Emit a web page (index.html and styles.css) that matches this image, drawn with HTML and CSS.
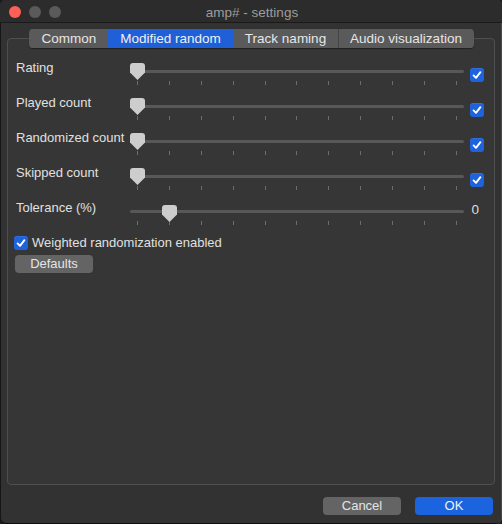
FILE: index.html
```html
<!DOCTYPE html>
<html>
<head>
<meta charset="utf-8">
<link rel="stylesheet" href="styles.css">
</head>
<body>
<div class="window">
  <div class="titlebar">
    <div class="lights">
      <span class="light red"></span>
      <span class="light gray"></span>
      <span class="light gray"></span>
    </div>
    <div class="title">amp# - settings</div>
  </div>
  <div class="main">
    <div class="tabs">
      <div class="tab t1">Common</div>
      <div class="tab t2 active">Modified random</div>
      <div class="tab t3">Track naming</div>
      <div class="tab t4">Audio visualization</div>
    </div>
    <div class="group">
      <div class="rows">
        <div class="row">
          <div class="label">Rating</div>
          <div class="slider">
            <div class="groove"></div>
            <svg class="handle pos0" width="15" height="17" viewBox="0 0 15 17"><path d="M3 0 H12 Q15 0 15 3 V9.5 L7.5 17 L0 9.5 V3 Q0 0 3 0 Z" fill="#cdcdcd"/></svg>
            <div class="ticks"><i></i><i></i><i></i><i></i><i></i><i></i><i></i><i></i><i></i><i></i><i></i></div>
          </div>
          <div class="right"><span class="check"><svg width="14" height="14" viewBox="0 0 14 14"><path d="M3.6 7.4 L6 9.8 L10.4 4.2" fill="none" stroke="#fff" stroke-width="1.9" stroke-linecap="round" stroke-linejoin="round"/></svg></span></div>
        </div>
        <div class="row">
          <div class="label">Played count</div>
          <div class="slider">
            <div class="groove"></div>
            <svg class="handle pos0" width="15" height="17" viewBox="0 0 15 17"><path d="M3 0 H12 Q15 0 15 3 V9.5 L7.5 17 L0 9.5 V3 Q0 0 3 0 Z" fill="#cdcdcd"/></svg>
            <div class="ticks"><i></i><i></i><i></i><i></i><i></i><i></i><i></i><i></i><i></i><i></i><i></i></div>
          </div>
          <div class="right"><span class="check"><svg width="14" height="14" viewBox="0 0 14 14"><path d="M3.6 7.4 L6 9.8 L10.4 4.2" fill="none" stroke="#fff" stroke-width="1.9" stroke-linecap="round" stroke-linejoin="round"/></svg></span></div>
        </div>
        <div class="row">
          <div class="label">Randomized count</div>
          <div class="slider">
            <div class="groove"></div>
            <svg class="handle pos0" width="15" height="17" viewBox="0 0 15 17"><path d="M3 0 H12 Q15 0 15 3 V9.5 L7.5 17 L0 9.5 V3 Q0 0 3 0 Z" fill="#cdcdcd"/></svg>
            <div class="ticks"><i></i><i></i><i></i><i></i><i></i><i></i><i></i><i></i><i></i><i></i><i></i></div>
          </div>
          <div class="right"><span class="check"><svg width="14" height="14" viewBox="0 0 14 14"><path d="M3.6 7.4 L6 9.8 L10.4 4.2" fill="none" stroke="#fff" stroke-width="1.9" stroke-linecap="round" stroke-linejoin="round"/></svg></span></div>
        </div>
        <div class="row">
          <div class="label">Skipped count</div>
          <div class="slider">
            <div class="groove"></div>
            <svg class="handle pos0" width="15" height="17" viewBox="0 0 15 17"><path d="M3 0 H12 Q15 0 15 3 V9.5 L7.5 17 L0 9.5 V3 Q0 0 3 0 Z" fill="#cdcdcd"/></svg>
            <div class="ticks"><i></i><i></i><i></i><i></i><i></i><i></i><i></i><i></i><i></i><i></i><i></i></div>
          </div>
          <div class="right"><span class="check"><svg width="14" height="14" viewBox="0 0 14 14"><path d="M3.6 7.4 L6 9.8 L10.4 4.2" fill="none" stroke="#fff" stroke-width="1.9" stroke-linecap="round" stroke-linejoin="round"/></svg></span></div>
        </div>
        <div class="row">
          <div class="label">Tolerance (%)</div>
          <div class="slider">
            <div class="groove"></div>
            <svg class="handle pos1" width="15" height="17" viewBox="0 0 15 17"><path d="M3 0 H12 Q15 0 15 3 V9.5 L7.5 17 L0 9.5 V3 Q0 0 3 0 Z" fill="#cdcdcd"/></svg>
            <div class="ticks"><i></i><i></i><i></i><i></i><i></i><i></i><i></i><i></i><i></i><i></i><i></i></div>
          </div>
          <div class="right"><span class="value">0</span></div>
        </div>
      </div>
      <div class="option">
        <span class="check"><svg width="14" height="14" viewBox="0 0 14 14"><path d="M3.6 7.4 L6 9.8 L10.4 4.2" fill="none" stroke="#fff" stroke-width="1.9" stroke-linecap="round" stroke-linejoin="round"/></svg></span>
        <span class="option-text">Weighted randomization enabled</span>
      </div>
      <div class="btn defaults">Defaults</div>
    </div>
    <div class="footer">
      <div class="btn cancel">Cancel</div>
      <div class="btn ok">OK</div>
    </div>
  </div>
</div>
</body>
</html>
```

FILE: styles.css
```css
* { box-sizing: border-box; }
html, body { margin: 0; padding: 0; background: #1b1b1b; }
body {
  font-family: "Liberation Sans", Arial, sans-serif;
  font-size: 13px;
  color: #dcdcdc;
}
.window {
  width: 502px;
  height: 524px;
  background: #323232;
  border-radius: 5px 5px 6px 6px;
  box-shadow: inset 1px 0 0 #161616, inset -1px 0 0 #4a4a4a, inset 0 -1px 0 #0c0c0c;
  overflow: hidden;
  display: flex;
  flex-direction: column;
}
.titlebar {
  height: 23px;
  background: #2c2c2c;
  border-bottom: 1px solid #1a1a1a;
  position: relative;
  display: flex;
  align-items: center;
  justify-content: center;
  flex-shrink: 0;
}
.lights {
  position: absolute;
  left: 9px;
  top: 6px;
  display: flex;
  gap: 8px;
}
.light {
  width: 12px;
  height: 12px;
  border-radius: 50%;
  background: #5a5a5a;
}
.light.red { background: #fe5f57; }
.title {
  color: #9d9d9d;
  font-size: 13.5px;
  margin-top: 2px;
  margin-left: 2px;
}
.main {
  flex: 1;
  display: flex;
  flex-direction: column;
  padding: 6px 8px 0 7px;
}
.tabs {
  display: flex;
  justify-content: center;
  height: 19px;
  position: relative;
  z-index: 2;
  margin-left: 22px;
  margin-right: 20px;
  border-radius: 4px;
  overflow: hidden;
  background: #5a5a5a;
  box-shadow: 0 0.5px 1px rgba(0,0,0,0.4);
}
.tab {
  height: 19px;
  line-height: 19px;
  text-align: center;
  color: #e6e6e6;
  background: #5a5a5a;
  font-size: 13.5px;
}
.tab.t1 { width: 78px; }
.tab.t2 { width: 125px; }
.tab.t3 { width: 105px; }
.tab.t4 { width: 135px; border-left: 1px solid #444; }
.tab.active { background: #1f5fd8; color: #f0f0f0; }
.group {
  margin-top: -10px;
  width: 488px;
  height: 447px;
  border: 1px solid #4f4f4f;
  border-radius: 4px;
  background: #363636;
  padding: 21px 10px 0 8px;
  display: flex;
  flex-direction: column;
}
.rows {
  display: flex;
  flex-direction: column;
}
.row {
  height: 35px;
  display: grid;
  grid-template-columns: 114px 334px 20px;
  align-items: start;
}
.label {
  line-height: 16px;
  color: #e0e0e0;
  white-space: nowrap;
}
.slider {
  position: relative;
  height: 22px;
  margin-top: 3px;
}
.groove {
  margin-top: 7px;
  height: 3px;
  border-radius: 2px;
  background: #585858;
}
.handle {
  position: absolute;
  top: 0;
  display: block;
}
.handle.pos0 { left: 0; }
.handle.pos1 { left: 32px; top: 2px; }
.ticks {
  display: flex;
  justify-content: space-between;
  padding: 0 7px 0 7px;
  margin-top: 8px;
}
.ticks i {
  display: block;
  width: 1px;
  height: 4px;
  background: #6c6c6c;
}
.right {
  display: flex;
  justify-content: flex-end;
  margin-top: 8px;
}
.check {
  display: flex;
  width: 14px;
  height: 14px;
  border-radius: 3px;
  background: #1e63dc;
  box-shadow: inset 0 1px 0 rgba(255,255,255,0.08);
  flex-shrink: 0;
}
.value {
  line-height: 16px;
  margin-top: -6px;
  margin-right: 5px;
  color: #dedede;
  font-size: 13.5px;
}
.option {
  display: flex;
  align-items: center;
  gap: 4px;
  height: 16px;
  margin-left: -2px;
}
.option-text {
  line-height: 16px;
  color: #e0e0e0;
}
.btn {
  height: 18px;
  line-height: 18px;
  width: 78px;
  text-align: center;
  border-radius: 4px;
  background: #646464;
  color: #e4e4e4;
  font-size: 13px;
}
.defaults {
  margin-top: 4px;
  margin-left: -1px;
}
.footer {
  display: flex;
  justify-content: flex-end;
  gap: 14px;
  margin-top: 12px;
  padding-right: 1px;
}
.ok { background: #1b63df; color: #f2f2f2; }
```
